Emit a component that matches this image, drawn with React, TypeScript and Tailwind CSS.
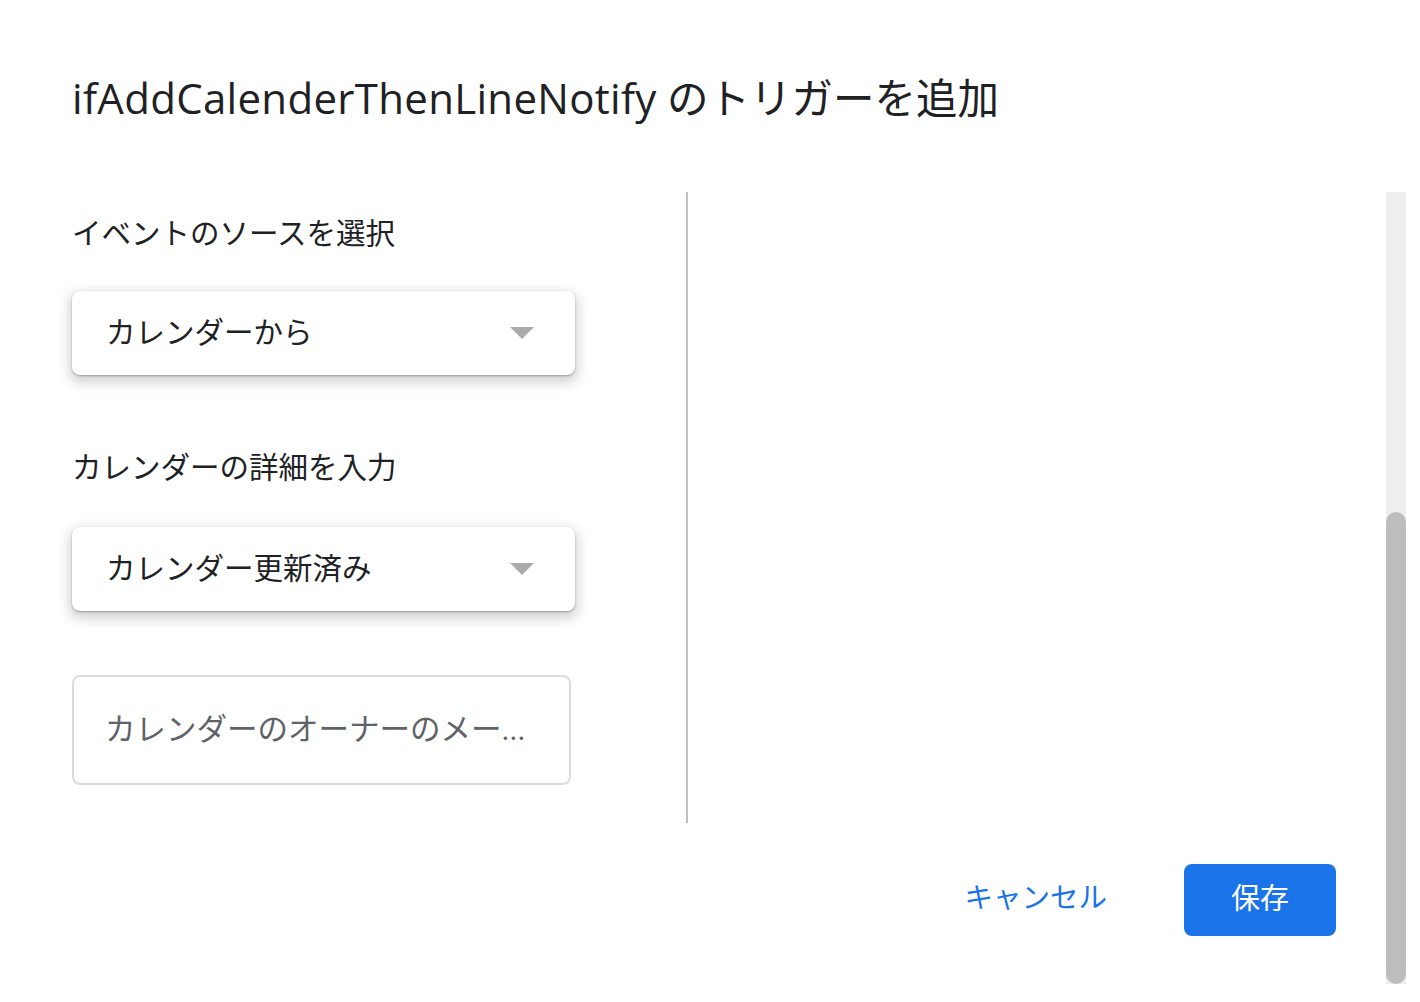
import { ReactNode } from "react";

const font = "font-['Roboto','Noto_Sans_CJK_JP',sans-serif]";

function Caret() {
  return (
    <svg width="24" height="12" viewBox="0 0 24 12" className="shrink-0">
      <path d="M0 0 L24 0 L12 12 Z" fill="#ababab" />
    </svg>
  );
}

function Dropdown({ children }: { children: ReactNode }) {
  return (
    <div className="flex h-[84px] w-[503px] items-center justify-between rounded-[8px] bg-white pl-[34px] pr-[41px] shadow-[0_1px_2px_rgba(60,64,67,0.4),0_5px_12px_3px_rgba(60,64,67,0.22)]">
      <span className="text-[29.5px] leading-[40px] text-[#202124]">{children}</span>
      <Caret />
    </div>
  );
}

function Label({ children, className }: { children: ReactNode; className?: string }) {
  return (
    <p className={`text-[29.5px] leading-[40px] text-[#202124] ${className ?? ""}`}>{children}</p>
  );
}

export default function App() {
  return (
    <div className={`flex h-[1002px] w-[1420px] flex-col overflow-hidden bg-white ${font}`}>
      <h1 className="h-[192px] pl-[72px] pt-[72px] text-[41.5px] font-normal leading-[52px] text-[#202124]">
        <span className="font-['Open_Sans',sans-serif] text-[42px] font-medium tracking-[0.3px]">
          ifAddCalenderThenLineNotify
        </span>{" "}
        のトリガーを追加
      </h1>

      <div className="flex h-[792px]">
        <div className="flex flex-1 flex-col">
          <div className="flex h-[631px]">
            <div className="flex w-[686px] flex-col pl-[72px]">
              <Label className="mt-[22px]">イベントのソースを選択</Label>
              <div className="mt-[37px]">
                <Dropdown>カレンダーから</Dropdown>
              </div>
              <Label className="mt-[73px]">カレンダーの詳細を入力</Label>
              <div className="mt-[39px]">
                <Dropdown>カレンダー更新済み</Dropdown>
              </div>
              <div className="mt-[64px] flex h-[110px] w-[499px] items-center rounded-[8px] border-2 border-[#dadce0] pl-[31px]">
                <div className="whitespace-nowrap text-[30.5px] leading-[40px] text-[#5f6368]">
                  カレンダーのオーナーのメー...
                </div>
              </div>
            </div>
            <div className="w-[2px] bg-[#bdc1c6]" />
            <div className="flex-1" />
          </div>

          <div className="flex items-start justify-end gap-[77px] pr-[50px] pt-[41px]">
            <button className="mt-[13px] text-[28.5px] leading-[44px] text-[#1a73e8]">キャンセル</button>
            <button className="flex h-[72px] w-[152px] items-center justify-center rounded-[8px] bg-[#1a73e8] text-[29px] text-white">
              保存
            </button>
          </div>
        </div>

        <div className="mr-[14px] flex w-[20px] flex-col justify-end bg-[#eeeeee]">
          <div className="h-[472px] rounded-full bg-[#bdbdbd]" />
        </div>
      </div>
    </div>
  );
}
